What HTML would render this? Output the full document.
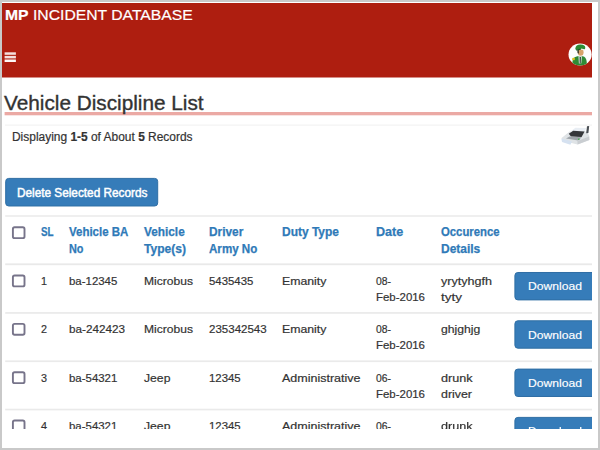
<!DOCTYPE html>
<html>
<head>
<meta charset="utf-8">
<title>MP Incident Database</title>
<style>
html,body{margin:0;padding:0;}
body{width:600px;height:450px;overflow:hidden;background:#c9c9c9;font-family:"Liberation Sans",sans-serif;}
#frame{position:absolute;left:2px;top:2px;width:596px;height:446px;background:#fff;overflow:hidden;}
#page{position:absolute;left:0;top:1px;width:590.4px;height:425.6px;overflow:hidden;background:#fff;filter:blur(0.45px);}
#shapes{position:absolute;left:0;top:0;}
.t{position:absolute;font-size:11.5px;line-height:14px;height:14px;color:#333;white-space:nowrap;transform-origin:0 50%;-webkit-text-stroke:0.2px #333;}
.th{font-size:12px;color:#2f7ab8;font-weight:bold;-webkit-text-stroke:0.25px #2f7ab8;}
.w{color:#fff;-webkit-text-stroke:0.15px #fff;}
.bd{font-weight:bold;}
.sm{font-size:11.5px;}
.sb{font-size:12px;-webkit-text-stroke:0.45px #fff;}
.dk{font-size:12px;color:#333;}
.h1{font-size:20px;line-height:24px;height:24px;color:#333;-webkit-text-stroke:0.35px #333;}
.brand{font-size:15.5px;line-height:18px;height:18px;color:#fff;-webkit-text-stroke:0.2px #fff;}
</style>
</head>
<body>
<div id="frame"><div id="page">
<svg id="shapes" width="590.4" height="425.6" viewBox="2 3 590.4 425.6"><rect x="2.00" y="3.00" width="590.40" height="74.50" fill="#ae1e10"/>
<rect x="4.60" y="52.30" width="11.30" height="2.50" fill="#fff" opacity="0.86"/>
<rect x="4.60" y="55.90" width="11.30" height="2.50" fill="#fff" opacity="0.86"/>
<rect x="4.60" y="59.50" width="11.30" height="2.50" fill="#fff" opacity="0.97"/>
<rect x="4.60" y="112.00" width="587.80" height="3.30" fill="#eba9a4"/>
<rect x="5.00" y="124.60" width="587.40" height="1.00" fill="#f0f0f0"/>
<rect x="5.7" y="178.4" width="152" height="27.6" rx="3" fill="#367cb9" stroke="#2e6da4" stroke-width="1"/>
<rect x="5.20" y="215.30" width="587.20" height="1.40" fill="#e9e9e9"/>
<rect x="5.20" y="263.40" width="587.20" height="1.80" fill="#e9e9e9"/>
<rect x="5.20" y="312.10" width="587.20" height="1.70" fill="#eaeaea"/>
<rect x="5.20" y="360.40" width="587.20" height="1.70" fill="#eaeaea"/>
<rect x="5.20" y="408.70" width="587.20" height="1.70" fill="#eaeaea"/>
<rect x="12.9" y="227.2" width="11.6" height="10.9" rx="1.7" fill="#fff" stroke="#77748a" stroke-width="1.9"/>
<rect x="12.9" y="275.50" width="11.6" height="10.9" rx="1.7" fill="#fff" stroke="#77748a" stroke-width="1.9"/>
<rect x="514.9" y="272.50" width="90" height="27.4" rx="3" fill="#367cb9" stroke="#2e6da4" stroke-width="1"/>
<rect x="12.9" y="323.85" width="11.6" height="10.9" rx="1.7" fill="#fff" stroke="#77748a" stroke-width="1.9"/>
<rect x="514.9" y="320.80" width="90" height="27.4" rx="3" fill="#367cb9" stroke="#2e6da4" stroke-width="1"/>
<rect x="12.9" y="372.20" width="11.6" height="10.9" rx="1.7" fill="#fff" stroke="#77748a" stroke-width="1.9"/>
<rect x="514.9" y="369.10" width="90" height="27.4" rx="3" fill="#367cb9" stroke="#2e6da4" stroke-width="1"/>
<rect x="12.9" y="420.55" width="11.6" height="10.9" rx="1.7" fill="#fff" stroke="#77748a" stroke-width="1.9"/>
<rect x="514.9" y="417.40" width="90" height="27.4" rx="3" fill="#367cb9" stroke="#2e6da4" stroke-width="1"/>
<g transform="translate(568.1,42.5)"><defs><clipPath id="ac"><ellipse cx="12" cy="12" rx="11.6" ry="11"/></clipPath></defs><ellipse cx="12" cy="12" rx="11.6" ry="11" fill="#fdfdfd"/><g clip-path="url(#ac)"><g transform="translate(-0.4,-0.5)"><path d="M4 25 L5.2 17.2 Q6.5 14.6 9.6 14.2 L15.2 14.2 Q18.2 15 18.8 18.5 L19.6 25 Z" fill="#2f8a35"/><path d="M10.8 14.2 L14.2 14.2 L13.6 21.5 L11.2 21.5 Z" fill="#e8ece8"/><path d="M11.9 15 L13.2 15 L13 21.5 L12 21.5 Z" fill="#2a3a2c"/><rect x="4.6" y="15.8" width="2.6" height="2.4" rx="0.8" fill="#d8c21e"/><ellipse cx="13" cy="10.2" rx="2.9" ry="3.6" fill="#d7a36a"/><path d="M9.6 8.4 L11 7.6 L11.2 11.6 L10 11.2 Z" fill="#2b2b22"/><path d="M7.6 6.6 Q8.2 2.4 13 2.6 Q17.6 2.8 17.6 5.8 L17.2 7.6 Q13 6.2 8.2 8 Z" fill="#2c8c34"/><path d="M13.2 6.4 L17.2 7.2 L17 8.6 L13.4 7.8 Z" fill="#f1f1ee"/><path d="M8.4 7.6 L13 6.6 L13 7.8 L8.8 8.8 Z" fill="#1f5f26"/></g></g></g>
<g transform="translate(560.6,125.4)"><path d="M1 12.5 L9 6.2 L26.8 6.2 L28.6 10.6 L28.8 14.6 L17 19 L1.6 15.4 Z" fill="#dfe3e6"/><path d="M0.8 13.2 L11.5 16 L9.8 19.4 L1.4 16.6 Z" fill="#d5e1f0"/><path d="M9.5 6.4 L14.8 2.4 L25.6 2.6 L24 6.6 Z" fill="#e9eef4"/><path d="M8.2 8.4 L12.6 5.4 L24 6.2 L21 11.6 L10.4 11.2 Z" fill="#34363a"/><path d="M9 11 L21.2 11.8 L17.6 15.2 L5.4 13.2 Z" fill="#9ea4aa"/><path d="M26.4 0.8 L28.6 0.6 L27.8 7.6 L25.6 7.8 Z" fill="#4a4f55"/><path d="M16.8 15.6 L28.6 11 L28.8 14.6 L17 19 Z" fill="#c9cdd1"/><rect x="17.4" y="13.2" width="1.6" height="1.2" fill="#3fae49"/></g></svg>
<div class="t th" style="left:38.7px;top:222.0px;transform:scaleX(0.821)">SL</div>
<div class="t th" style="left:67.0px;top:222.0px;transform:scaleX(0.956)">Vehicle BA</div>
<div class="t th" style="left:67.0px;top:239.0px;transform:scaleX(0.906)">No</div>
<div class="t th" style="left:142.3px;top:222.0px;transform:scaleX(0.984)">Vehicle</div>
<div class="t th" style="left:142.3px;top:239.0px;transform:scaleX(1.005)">Type(s)</div>
<div class="t th" style="left:207.0px;top:222.0px;transform:scaleX(0.989)">Driver</div>
<div class="t th" style="left:207.0px;top:239.0px;transform:scaleX(0.966)">Army No</div>
<div class="t th" style="left:280.3px;top:222.0px;transform:scaleX(0.998)">Duty Type</div>
<div class="t th" style="left:374.0px;top:222.0px;transform:scaleX(1.049)">Date</div>
<div class="t th" style="left:438.7px;top:222.0px;transform:scaleX(0.944)">Occurence</div>
<div class="t th" style="left:438.7px;top:239.0px;transform:scaleX(0.998)">Details</div>
<div class="t " style="left:38.6px;top:271.0px;transform:scaleX(0.937)">1</div>
<div class="t " style="left:67.0px;top:271.0px;transform:scaleX(0.994)">ba-12345</div>
<div class="t " style="left:142.3px;top:271.0px;transform:scaleX(1.050)">Microbus</div>
<div class="t " style="left:207.0px;top:271.0px;transform:scaleX(0.989)">5435435</div>
<div class="t " style="left:280.3px;top:271.0px;transform:scaleX(1.069)">Emanity</div>
<div class="t " style="left:374.0px;top:271.0px;transform:scaleX(0.902)">08-</div>
<div class="t " style="left:374.0px;top:287.0px;transform:scaleX(0.995)">Feb-2016</div>
<div class="t " style="left:438.7px;top:271.0px;transform:scaleX(1.093)">yrytyhgfh</div>
<div class="t " style="left:438.7px;top:287.0px;transform:scaleX(1.174)">tyty</div>
<div class="t w sm" style="left:525.6px;top:276.0px;transform:scaleX(1.056)">Download</div>
<div class="t " style="left:38.6px;top:319.0px;transform:scaleX(0.937)">2</div>
<div class="t " style="left:67.0px;top:319.0px;transform:scaleX(1.018)">ba-242423</div>
<div class="t " style="left:142.3px;top:319.0px;transform:scaleX(1.050)">Microbus</div>
<div class="t " style="left:207.0px;top:319.0px;transform:scaleX(1.002)">235342543</div>
<div class="t " style="left:280.3px;top:319.0px;transform:scaleX(1.069)">Emanity</div>
<div class="t " style="left:374.0px;top:319.0px;transform:scaleX(0.902)">08-</div>
<div class="t " style="left:374.0px;top:335.0px;transform:scaleX(0.995)">Feb-2016</div>
<div class="t " style="left:438.7px;top:319.0px;transform:scaleX(1.059)">ghjghjg</div>
<div class="t w sm" style="left:525.6px;top:325.0px;transform:scaleX(1.056)">Download</div>
<div class="t " style="left:38.6px;top:368.0px;transform:scaleX(0.937)">3</div>
<div class="t " style="left:67.0px;top:368.0px;transform:scaleX(0.994)">ba-54321</div>
<div class="t " style="left:142.3px;top:368.0px;transform:scaleX(1.059)">Jeep</div>
<div class="t " style="left:207.0px;top:368.0px;transform:scaleX(0.991)">12345</div>
<div class="t " style="left:280.3px;top:368.0px;transform:scaleX(1.086)">Administrative</div>
<div class="t " style="left:374.0px;top:368.0px;transform:scaleX(0.902)">06-</div>
<div class="t " style="left:374.0px;top:384.0px;transform:scaleX(0.995)">Feb-2016</div>
<div class="t " style="left:438.7px;top:368.0px;transform:scaleX(1.098)">drunk</div>
<div class="t " style="left:438.7px;top:384.0px;transform:scaleX(1.078)">driver</div>
<div class="t w sm" style="left:525.6px;top:373.0px;transform:scaleX(1.056)">Download</div>
<div class="t " style="left:38.6px;top:416.0px;transform:scaleX(0.937)">4</div>
<div class="t " style="left:67.0px;top:416.0px;transform:scaleX(0.994)">ba-54321</div>
<div class="t " style="left:142.3px;top:416.0px;transform:scaleX(1.059)">Jeep</div>
<div class="t " style="left:207.0px;top:416.0px;transform:scaleX(0.991)">12345</div>
<div class="t " style="left:280.3px;top:416.0px;transform:scaleX(1.086)">Administrative</div>
<div class="t " style="left:374.0px;top:416.0px;transform:scaleX(0.902)">06-</div>
<div class="t " style="left:374.0px;top:432.0px;transform:scaleX(0.995)">Feb-2016</div>
<div class="t " style="left:438.7px;top:416.0px;transform:scaleX(1.098)">drunk</div>
<div class="t " style="left:438.7px;top:432.0px;transform:scaleX(1.078)">driver</div>
<div class="t w sm" style="left:525.6px;top:421.0px;transform:scaleX(1.056)">Download</div>
<div class="t dk" style="left:10.1px;top:127.0px;transform:scaleX(0.995)">Displaying <b>1-5</b> of About <b>5</b> Records</div>
<div class="t w sb" style="left:15.0px;top:183.0px;transform:scaleX(0.982)">Delete Selected Records</div>
<div class="t h1" style="left:2.4px;top:88.0px;transform:scaleX(1.038)">Vehicle Discipline List</div>
<div class="t brand" style="left:2.8px;top:3.0px;transform:scaleX(1.014)"><b>MP</b> INCIDENT DATABASE</div>
</div></div>
</body>
</html>
